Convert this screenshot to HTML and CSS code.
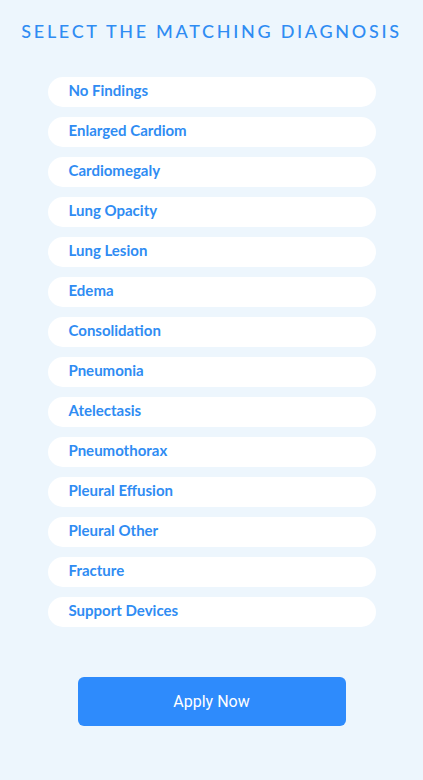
FILE: index.html
```html
<!DOCTYPE html>
<html>
<head>
<meta charset="utf-8">
<link rel="stylesheet" href="styles.css">
</head>
<body>
<div class="page">
  <h1 class="title">Select the matching diagnosis</h1>
  <ul class="options">
    <li class="option">No Findings</li>
    <li class="option">Enlarged Cardiom</li>
    <li class="option">Cardiomegaly</li>
    <li class="option">Lung Opacity</li>
    <li class="option">Lung Lesion</li>
    <li class="option">Edema</li>
    <li class="option">Consolidation</li>
    <li class="option">Pneumonia</li>
    <li class="option">Atelectasis</li>
    <li class="option">Pneumothorax</li>
    <li class="option">Pleural Effusion</li>
    <li class="option">Pleural Other</li>
    <li class="option">Fracture</li>
    <li class="option">Support Devices</li>
  </ul>
  <div class="actions">
    <button class="apply">Apply Now</button>
  </div>
</div>
</body>
</html>
```
FILE: styles.css
```css
html, body {
  margin: 0;
  padding: 0;
  background: #edf6fd;
}
.page {
  width: 423px;
  height: 780px;
  display: flex;
  flex-direction: column;
  align-items: center;
  box-sizing: border-box;
  padding-top: 20px;
}
.title {
  margin: 0;
  font-family: "Lato", sans-serif;
  font-weight: 500;
  font-size: 18px;
  line-height: 22px;
  letter-spacing: 2.7px;
  text-transform: uppercase;
  color: #2f8cf3;
  white-space: nowrap;
}
.options {
  list-style: none;
  margin: 35px 0 0;
  padding: 0;
  display: flex;
  flex-direction: column;
  gap: 10px;
  width: 328px;
}
.option {
  height: 30px;
  border-radius: 15px;
  background: #ffffff;
  padding: 0 0 4px 21px;
  display: flex;
  align-items: center;
  font-family: "Lato", sans-serif;
  font-weight: 700;
  font-size: 15px;
  color: #2f8cf3;
  box-sizing: border-box;
}
.actions {
  margin-top: 50px;
}
.apply {
  width: 268px;
  height: 49px;
  border: none;
  border-radius: 6px;
  background: #2e8bfc;
  color: #ffffff;
  font-family: "Roboto", sans-serif;
  font-size: 16px;
  font-weight: 400;
}
```
